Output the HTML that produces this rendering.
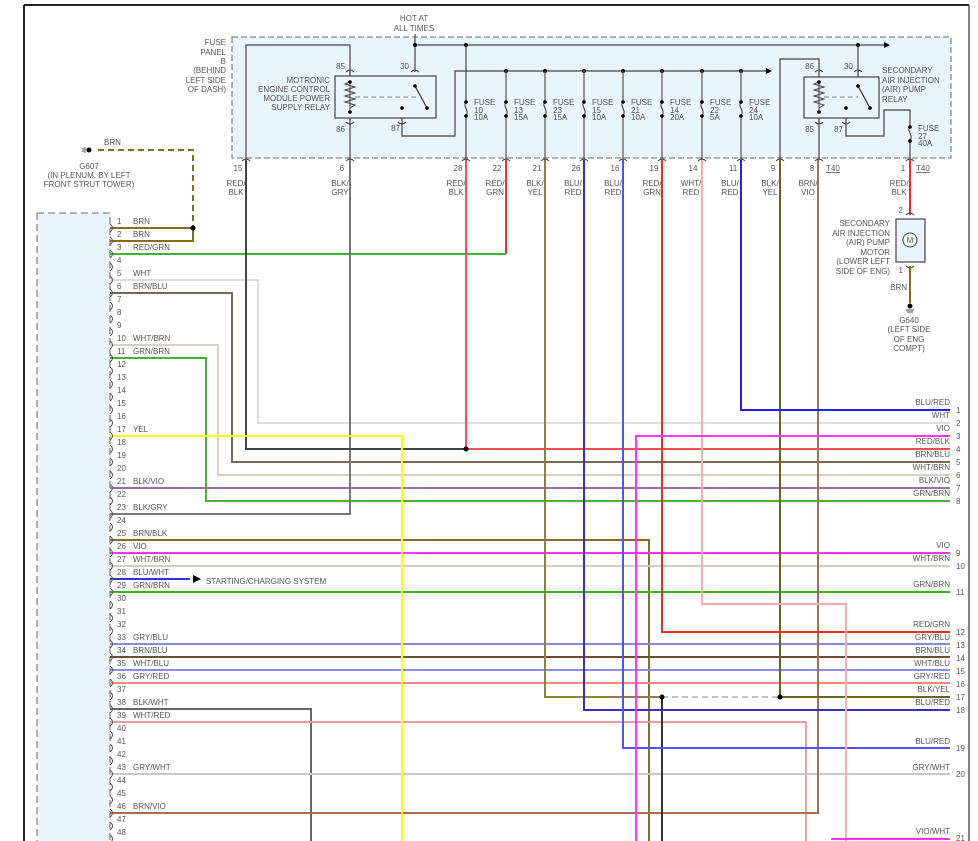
<!DOCTYPE html>
<html><head><meta charset="utf-8"><style>
html,body{margin:0;padding:0;background:#fff;width:978px;height:841px;overflow:hidden}
svg{display:block;font-family:"Liberation Sans",sans-serif;font-size:8px;fill:#555}
</style></head><body>
<svg width="978" height="841" viewBox="0 0 978 841" xmlns="http://www.w3.org/2000/svg">
<!-- frame -->
<line x1="24" y1="5" x2="969" y2="5" stroke="#222" stroke-width="2"/>
<line x1="24" y1="5" x2="24" y2="841" stroke="#222" stroke-width="2"/>
<line x1="969" y1="5" x2="969" y2="841" stroke="#555" stroke-width="1.5"/>

<!-- fuse panel -->
<rect x="232" y="37" width="719" height="121" fill="#e8f5fd" stroke="#888" stroke-dasharray="6,3" stroke-width="1.3"/>
<g text-anchor="end"><text x="226" y="45">FUSE</text><text x="226" y="55">PANEL</text><text x="226" y="64">B</text><text x="226" y="73">(BEHIND</text><text x="226" y="83">LEFT SIDE</text><text x="226" y="92">OF DASH)</text></g>
<text x="414" y="21" text-anchor="middle">HOT AT</text><text x="414" y="31" text-anchor="middle">ALL TIMES</text>

<g stroke="#444" stroke-width="1.2" fill="none">
<polyline points="415,34 415,72"/>
<line x1="415" y1="45" x2="884" y2="45"/>
<polyline points="246,160 246,45 350,45 350,160"/>
<polyline points="402,105 402,136 455,136 455,71 766,71"/>
<line x1="466" y1="45" x2="466" y2="160"/>
<polyline points="780,160 780,59 819,59 819,160"/>
<line x1="858" y1="45" x2="858" y2="77"/>
<polyline points="846,108 846,136 884,136 884,110 910,110 910,160"/>
</g>
<g fill="#000"><polygon points="884,42 890,45 884,48"/><polygon points="766,68 772,71 766,74"/>
<circle cx="415" cy="45" r="2"/><circle cx="466" cy="45" r="2"/><circle cx="858" cy="45" r="2"/>
<circle cx="506" cy="71" r="2"/><circle cx="545" cy="71" r="2"/><circle cx="584" cy="71" r="2"/><circle cx="623" cy="71" r="2"/><circle cx="662" cy="71" r="2"/><circle cx="702" cy="71" r="2"/><circle cx="741" cy="71" r="2"/></g>
<g stroke="#555" stroke-width="1.2"><line x1="506" y1="71" x2="506" y2="160"/><line x1="545" y1="71" x2="545" y2="160"/><line x1="584" y1="71" x2="584" y2="160"/><line x1="623" y1="71" x2="623" y2="160"/><line x1="662" y1="71" x2="662" y2="160"/><line x1="702" y1="71" x2="702" y2="160"/><line x1="741" y1="71" x2="741" y2="160"/></g>

<!-- fuses -->
<g>
<g transform="translate(466,0)"><rect x="-3" y="103" width="6" height="12" fill="#e8f5fd"/><path d="M0,102 C-4,106 4,110 0,116" stroke="#333" fill="none"/><circle cx="0" cy="102" r="1.8" fill="#000"/><circle cx="0" cy="116" r="1.8" fill="#000"/><text x="8" y="105">FUSE</text><text x="8" y="113">10</text><text x="8" y="120">10A</text></g>
<g transform="translate(506,0)"><rect x="-3" y="103" width="6" height="12" fill="#e8f5fd"/><path d="M0,102 C-4,106 4,110 0,116" stroke="#333" fill="none"/><circle cx="0" cy="102" r="1.8" fill="#000"/><circle cx="0" cy="116" r="1.8" fill="#000"/><text x="8" y="105">FUSE</text><text x="8" y="113">13</text><text x="8" y="120">15A</text></g>
<g transform="translate(545,0)"><rect x="-3" y="103" width="6" height="12" fill="#e8f5fd"/><path d="M0,102 C-4,106 4,110 0,116" stroke="#333" fill="none"/><circle cx="0" cy="102" r="1.8" fill="#000"/><circle cx="0" cy="116" r="1.8" fill="#000"/><text x="8" y="105">FUSE</text><text x="8" y="113">23</text><text x="8" y="120">15A</text></g>
<g transform="translate(584,0)"><rect x="-3" y="103" width="6" height="12" fill="#e8f5fd"/><path d="M0,102 C-4,106 4,110 0,116" stroke="#333" fill="none"/><circle cx="0" cy="102" r="1.8" fill="#000"/><circle cx="0" cy="116" r="1.8" fill="#000"/><text x="8" y="105">FUSE</text><text x="8" y="113">15</text><text x="8" y="120">10A</text></g>
<g transform="translate(623,0)"><rect x="-3" y="103" width="6" height="12" fill="#e8f5fd"/><path d="M0,102 C-4,106 4,110 0,116" stroke="#333" fill="none"/><circle cx="0" cy="102" r="1.8" fill="#000"/><circle cx="0" cy="116" r="1.8" fill="#000"/><text x="8" y="105">FUSE</text><text x="8" y="113">21</text><text x="8" y="120">10A</text></g>
<g transform="translate(662,0)"><rect x="-3" y="103" width="6" height="12" fill="#e8f5fd"/><path d="M0,102 C-4,106 4,110 0,116" stroke="#333" fill="none"/><circle cx="0" cy="102" r="1.8" fill="#000"/><circle cx="0" cy="116" r="1.8" fill="#000"/><text x="8" y="105">FUSE</text><text x="8" y="113">14</text><text x="8" y="120">20A</text></g>
<g transform="translate(702,0)"><rect x="-3" y="103" width="6" height="12" fill="#e8f5fd"/><path d="M0,102 C-4,106 4,110 0,116" stroke="#333" fill="none"/><circle cx="0" cy="102" r="1.8" fill="#000"/><circle cx="0" cy="116" r="1.8" fill="#000"/><text x="8" y="105">FUSE</text><text x="8" y="113">22</text><text x="8" y="120">5A</text></g>
<g transform="translate(741,0)"><rect x="-3" y="103" width="6" height="12" fill="#e8f5fd"/><path d="M0,102 C-4,106 4,110 0,116" stroke="#333" fill="none"/><circle cx="0" cy="102" r="1.8" fill="#000"/><circle cx="0" cy="116" r="1.8" fill="#000"/><text x="8" y="105">FUSE</text><text x="8" y="113">24</text><text x="8" y="120">10A</text></g>
<g transform="translate(910,0)"><rect x="-3" y="127" width="6" height="12" fill="#e8f5fd"/><path d="M0,127 C-4,131 4,135 0,141" stroke="#333" fill="none"/><circle cx="0" cy="127" r="1.8" fill="#000"/><circle cx="0" cy="141" r="1.8" fill="#000"/><text x="8" y="131">FUSE</text><text x="8" y="139">27</text><text x="8" y="146">40A</text></g>
</g>

<!-- relay 1 -->
<rect x="335" y="76" width="101" height="42" fill="#e8f5fd" stroke="#444" stroke-width="1.2"/>
<path d="M350,82 L345,84 L355,87 L345,90 L355,93 L345,96 L355,99 L345,102 L355,105 L350,108" stroke="#444" fill="none"/>
<line x1="350" y1="82" x2="350" y2="112" stroke="#444"/>
<circle cx="350" cy="82" r="1.8" fill="#000"/><circle cx="350" cy="112" r="1.8" fill="#000"/>
<line x1="355" y1="97" x2="418" y2="97" stroke="#888" stroke-dasharray="5,3"/>
<line x1="415" y1="86" x2="427" y2="108" stroke="#333" stroke-width="1.2"/>
<circle cx="415" cy="86" r="1.8" fill="#000"/><circle cx="427" cy="108" r="1.8" fill="#000"/><circle cx="402" cy="108" r="1.8" fill="#000"/>
<text x="345" y="69" text-anchor="end">85</text><text x="409" y="69" text-anchor="end">30</text><text x="345" y="132" text-anchor="end">86</text><text x="400" y="131" text-anchor="end">87</text>
<g text-anchor="end"><text x="330" y="83">MOTRONIC</text><text x="330" y="92">ENGINE CONTROL</text><text x="330" y="101">MODULE POWER</text><text x="330" y="110">SUPPLY RELAY</text></g>

<!-- relay 2 -->
<rect x="804" y="77" width="75" height="41" fill="#e8f5fd" stroke="#444" stroke-width="1.2"/>
<path d="M819,82 L814,84 L824,87 L814,90 L824,93 L814,96 L824,99 L814,102 L824,105 L819,108" stroke="#444" fill="none"/>
<line x1="819" y1="82" x2="819" y2="112" stroke="#444"/>
<circle cx="819" cy="82" r="1.8" fill="#000"/><circle cx="819" cy="112" r="1.8" fill="#000"/>
<line x1="824" y1="97" x2="858" y2="97" stroke="#888" stroke-dasharray="5,3"/>
<line x1="858" y1="86" x2="870" y2="108" stroke="#333" stroke-width="1.2"/>
<circle cx="858" cy="86" r="1.8" fill="#000"/><circle cx="870" cy="108" r="1.8" fill="#000"/><circle cx="846" cy="108" r="1.8" fill="#000"/>
<text x="814" y="69" text-anchor="end">86</text><text x="853" y="69" text-anchor="end">30</text><text x="814" y="132" text-anchor="end">85</text><text x="843" y="132" text-anchor="end">87</text>
<text x="882" y="73">SECONDARY</text><text x="882" y="83">AIR INJECTION</text><text x="882" y="92">(AIR) PUMP</text><text x="882" y="102">RELAY</text>

<!-- ground G607 -->
<polyline points="98,150 193,150 193,228" stroke="#8a6a1e" stroke-width="2" fill="none" stroke-dasharray="6,4"/>
<circle cx="89" cy="150" r="2.5" fill="#000"/><line x1="85" y1="147" x2="85" y2="153" stroke="#444"/><line x1="83" y1="148" x2="83" y2="152" stroke="#444"/>
<text x="104" y="145">BRN</text>
<g text-anchor="middle"><text x="89" y="169">G607</text><text x="89" y="178">(IN PLENUM, BY LEFT</text><text x="89" y="187">FRONT STRUT TOWER)</text></g>

<!-- fuse pin labels -->
<g text-anchor="middle">
<text x="238" y="171">15</text><text x="236" y="186">RED/</text><text x="236" y="195">BLK</text>
<text x="342" y="171">6</text><text x="340" y="186">BLK/</text><text x="340" y="195">GRY</text>
<text x="458" y="171">28</text><text x="456" y="186">RED/</text><text x="456" y="195">BLK</text>
<text x="497" y="171">22</text><text x="495" y="186">RED/</text><text x="495" y="195">GRN</text>
<text x="537" y="171">21</text><text x="535" y="186">BLK/</text><text x="535" y="195">YEL</text>
<text x="576" y="171">26</text><text x="573" y="186">BLU/</text><text x="573" y="195">RED</text>
<text x="615" y="171">16</text><text x="613" y="186">BLU/</text><text x="613" y="195">RED</text>
<text x="654" y="171">19</text><text x="652" y="186">RED/</text><text x="652" y="195">GRN</text>
<text x="693" y="171">14</text><text x="691" y="186">WHT/</text><text x="691" y="195">RED</text>
<text x="733" y="171">11</text><text x="730" y="186">BLU/</text><text x="730" y="195">RED</text>
<text x="773" y="171">9</text><text x="770" y="186">BLK/</text><text x="770" y="195">YEL</text>
<text x="812" y="171">8</text><text x="808" y="186">BRN/</text><text x="808" y="195">VIO</text>
<text x="903" y="171">1</text><text x="899" y="186">RED/</text><text x="899" y="195">BLK</text>
</g>
<text x="826" y="171" text-decoration="underline">T40</text><text x="916" y="171" text-decoration="underline">T40</text>
<!-- connector arcs fuse panel -->
<g stroke="#444" fill="none" stroke-width="1">
<path d="M242,161 q4,-4 8,0 M346,161 q4,-4 8,0 M462,161 q4,-4 8,0 M502,161 q4,-4 8,0 M541,161 q4,-4 8,0 M580,161 q4,-4 8,0 M619,161 q4,-4 8,0 M658,161 q4,-4 8,0 M698,161 q4,-4 8,0 M737,161 q4,-4 8,0 M776,161 q4,-4 8,0 M815,161 q4,-4 8,0 M906,161 q4,-4 8,0"/>
<path d="M346,72 q4,-4 8,0 M411,72 q4,-4 8,0 M346,122 q4,4 8,0 M398,122 q4,4 8,0 M815,72 q4,-4 8,0 M854,72 q4,-4 8,0 M815,122 q4,4 8,0 M842,122 q4,4 8,0"/>
</g>

<!-- motor -->
<line x1="910" y1="160" x2="910" y2="215" stroke="#e03030" stroke-width="2"/>
<rect x="896" y="219" width="29" height="43" fill="#e8f5fd" stroke="#444" stroke-width="1.2"/>
<circle cx="910" cy="240" r="7" fill="#fff" stroke="#444"/><text x="910" y="243" text-anchor="middle" font-size="8">M</text>
<path d="M906,215 q4,-4 8,0 M906,266 q4,4 8,0" stroke="#444" fill="none"/>
<text x="903" y="213" text-anchor="end">2</text><text x="903" y="273" text-anchor="end">1</text>
<g text-anchor="end"><text x="890" y="226">SECONDARY</text><text x="890" y="236">AIR INJECTION</text><text x="890" y="245">(AIR) PUMP</text><text x="890" y="255">MOTOR</text><text x="890" y="264">(LOWER LEFT</text><text x="890" y="274">SIDE OF ENG)</text></g>
<line x1="910" y1="266" x2="910" y2="303" stroke="#8a6a1e" stroke-width="2"/>
<text x="907" y="290" text-anchor="end">BRN</text>
<circle cx="910" cy="306" r="2.5" fill="#000"/><line x1="906" y1="310" x2="914" y2="310" stroke="#444"/><line x1="907" y1="312" x2="913" y2="312" stroke="#444"/>
<g text-anchor="middle"><text x="909" y="323">G640</text><text x="909" y="332">(LEFT SIDE</text><text x="909" y="342">OF ENG</text><text x="909" y="351">COMPT)</text></g>

<!-- left connector -->
<rect x="37" y="213" width="73" height="640" fill="#e8f5fd" stroke="#888" stroke-dasharray="7,4" stroke-width="1.3"/>

<!-- wires -->
<g fill="none" stroke-width="2">
<polyline points="110,228 193,228" stroke="#8a6a1e"/>
<polyline points="110,241 193,241 193,228" stroke="#8a6a1e"/>
<polyline points="110,254 506,254" stroke="#3cb43c"/>
<line x1="506" y1="160" x2="506" y2="254" stroke="#e83030"/>
<polyline points="110,280 258,280 258,423 950,423" stroke="#ddd"/>
<polyline points="110,293 232,293 232,462 950,462" stroke="#7a6850"/>
<polyline points="110,345 218,345 218,475 950,475" stroke="#d8d0c0"/>
<polyline points="110,358 206,358 206,501 950,501" stroke="#4cb030"/>
<polyline points="110,488 950,488" stroke="#9a7098"/>
<polyline points="110,514 350,514 350,160" stroke="#777"/>
<polyline points="110,540 649,540 649,841" stroke="#8a6a2a"/>
<polyline points="110,553 950,553" stroke="#ff33ff"/>
<polyline points="110,566 950,566" stroke="#d4ccbc"/>
<polyline points="110,579 190,579" stroke="#3030e0"/>
<polyline points="110,592 950,592" stroke="#40b020"/>
<polyline points="110,644 950,644" stroke="#8888dd"/>
<polyline points="110,657 950,657" stroke="#6a5030"/>
<polyline points="110,670 950,670" stroke="#8c8cee"/>
<polyline points="110,683 950,683" stroke="#f08888"/>
<polyline points="110,709 311,709 311,841" stroke="#666"/>
<polyline points="110,722 806,722 806,841" stroke="#e4a0a0"/>
<polyline points="110,774 950,774" stroke="#c8c8c8"/>
<polyline points="110,813 818,813 818,160" stroke="#a8704a"/>
<polyline points="246,160 246,449 466,449" stroke="#444"/>
<polyline points="466,160 466,449 950,449" stroke="#f05050"/>
<polyline points="545,160 545,697 662,697" stroke="#908040"/>
<line x1="662" y1="697" x2="662" y2="841" stroke="#333"/>
<polyline points="780,160 780,697 950,697" stroke="#706020"/>
<polyline points="584,160 584,710 950,710" stroke="#3a30c0"/>
<polyline points="623,160 623,748 950,748" stroke="#5050ff"/>
<polyline points="662,160 662,632 950,632" stroke="#e83020"/>
<polyline points="702,160 702,604 846,604 846,841" stroke="#f4b0b0"/>
<polyline points="741,160 741,410 950,410" stroke="#2020f0"/>
<polyline points="402,436 402,841" stroke="#ffff00"/>
<polyline points="110,436 402,436" stroke="#ffff00"/>
<polyline points="950,436 636,436 636,841" stroke="#ff33ff"/>
<polyline points="831,839 950,839" stroke="#ff33ff"/>
</g>
<line x1="662" y1="697" x2="780" y2="697" stroke="#888" stroke-dasharray="6,4"/>
<circle cx="466" cy="449" r="2.5" fill="#000"/><circle cx="193" cy="228" r="2.5" fill="#000"/>
<circle cx="662" cy="697" r="2.5" fill="#000"/><circle cx="780" cy="697" r="2.5" fill="#000"/>
<polygon points="193,575 201,579 193,583" fill="#000"/>
<text x="206" y="584">STARTING/CHARGING SYSTEM</text>

<!-- left pin arcs and numbers -->
<g stroke="#555" fill="none">
<path d="M110,224 q5,4 0,8 M110,237 q5,4 0,8 M110,250 q5,4 0,8 M110,263 q5,4 0,8 M110,276 q5,4 0,8 M110,289 q5,4 0,8 M110,302 q5,4 0,8 M110,315 q5,4 0,8 M110,328 q5,4 0,8 M110,341 q5,4 0,8 M110,354 q5,4 0,8 M110,367 q5,4 0,8 M110,380 q5,4 0,8 M110,393 q5,4 0,8 M110,406 q5,4 0,8 M110,419 q5,4 0,8 M110,432 q5,4 0,8 M110,445 q5,4 0,8 M110,458 q5,4 0,8 M110,471 q5,4 0,8 M110,484 q5,4 0,8 M110,497 q5,4 0,8 M110,510 q5,4 0,8 M110,523 q5,4 0,8 M110,536 q5,4 0,8 M110,549 q5,4 0,8 M110,562 q5,4 0,8 M110,575 q5,4 0,8 M110,588 q5,4 0,8 M110,601 q5,4 0,8 M110,614 q5,4 0,8 M110,627 q5,4 0,8 M110,640 q5,4 0,8 M110,653 q5,4 0,8 M110,666 q5,4 0,8 M110,679 q5,4 0,8 M110,692 q5,4 0,8 M110,705 q5,4 0,8 M110,718 q5,4 0,8 M110,731 q5,4 0,8 M110,744 q5,4 0,8 M110,757 q5,4 0,8 M110,770 q5,4 0,8 M110,783 q5,4 0,8 M110,796 q5,4 0,8 M110,809 q5,4 0,8 M110,822 q5,4 0,8 M110,835 q5,4 0,8"/>
</g>
<g>
<text x="117" y="224">1</text><text x="117" y="237">2</text><text x="117" y="250">3</text><text x="117" y="263">4</text><text x="117" y="276">5</text><text x="117" y="289">6</text><text x="117" y="302">7</text><text x="117" y="315">8</text><text x="117" y="328">9</text><text x="117" y="341">10</text><text x="117" y="354">11</text><text x="117" y="367">12</text><text x="117" y="380">13</text><text x="117" y="393">14</text><text x="117" y="406">15</text><text x="117" y="419">16</text><text x="117" y="432">17</text><text x="117" y="445">18</text><text x="117" y="458">19</text><text x="117" y="471">20</text><text x="117" y="484">21</text><text x="117" y="497">22</text><text x="117" y="510">23</text><text x="117" y="523">24</text><text x="117" y="536">25</text><text x="117" y="549">26</text><text x="117" y="562">27</text><text x="117" y="575">28</text><text x="117" y="588">29</text><text x="117" y="601">30</text><text x="117" y="614">31</text><text x="117" y="627">32</text><text x="117" y="640">33</text><text x="117" y="653">34</text><text x="117" y="666">35</text><text x="117" y="679">36</text><text x="117" y="692">37</text><text x="117" y="705">38</text><text x="117" y="718">39</text><text x="117" y="731">40</text><text x="117" y="744">41</text><text x="117" y="757">42</text><text x="117" y="770">43</text><text x="117" y="783">44</text><text x="117" y="796">45</text><text x="117" y="809">46</text><text x="117" y="822">47</text><text x="117" y="835">48</text>
<text x="133" y="224">BRN</text><text x="133" y="237">BRN</text><text x="133" y="250">RED/GRN</text><text x="133" y="276">WHT</text><text x="133" y="289">BRN/BLU</text><text x="133" y="341">WHT/BRN</text><text x="133" y="354">GRN/BRN</text><text x="133" y="432">YEL</text><text x="133" y="484">BLK/VIO</text><text x="133" y="510">BLK/GRY</text><text x="133" y="536">BRN/BLK</text><text x="133" y="549">VIO</text><text x="133" y="562">WHT/BRN</text><text x="133" y="575">BLU/WHT</text><text x="133" y="588">GRN/BRN</text><text x="133" y="640">GRY/BLU</text><text x="133" y="653">BRN/BLU</text><text x="133" y="666">WHT/BLU</text><text x="133" y="679">GRY/RED</text><text x="133" y="705">BLK/WHT</text><text x="133" y="718">WHT/RED</text><text x="133" y="770">GRY/WHT</text><text x="133" y="809">BRN/VIO</text>
</g>

<!-- right labels -->
<g text-anchor="end">
<text x="950" y="405">BLU/RED</text><text x="950" y="418">WHT</text><text x="950" y="431">VIO</text><text x="950" y="444">RED/BLK</text><text x="950" y="457">BRN/BLU</text><text x="950" y="470">WHT/BRN</text><text x="950" y="483">BLK/VIO</text><text x="950" y="496">GRN/BRN</text><text x="950" y="548">VIO</text><text x="950" y="561">WHT/BRN</text><text x="950" y="587">GRN/BRN</text><text x="950" y="627">RED/GRN</text><text x="950" y="640">GRY/BLU</text><text x="950" y="653">BRN/BLU</text><text x="950" y="666">WHT/BLU</text><text x="950" y="679">GRY/RED</text><text x="950" y="692">BLK/YEL</text><text x="950" y="705">BLU/RED</text><text x="950" y="744">BLU/RED</text><text x="950" y="770">GRY/WHT</text><text x="950" y="834">VIO/WHT</text>
</g>
<g>
<text x="956" y="413">1</text><text x="956" y="426">2</text><text x="956" y="439">3</text><text x="956" y="452">4</text><text x="956" y="465">5</text><text x="956" y="478">6</text><text x="956" y="491">7</text><text x="956" y="504">8</text><text x="956" y="556">9</text><text x="956" y="569">10</text><text x="956" y="595">11</text><text x="956" y="635">12</text><text x="956" y="648">13</text><text x="956" y="661">14</text><text x="956" y="674">15</text><text x="956" y="687">16</text><text x="956" y="700">17</text><text x="956" y="713">18</text><text x="956" y="751">19</text><text x="956" y="777">20</text><text x="956" y="841">21</text>
</g>
</svg>
</body></html>
